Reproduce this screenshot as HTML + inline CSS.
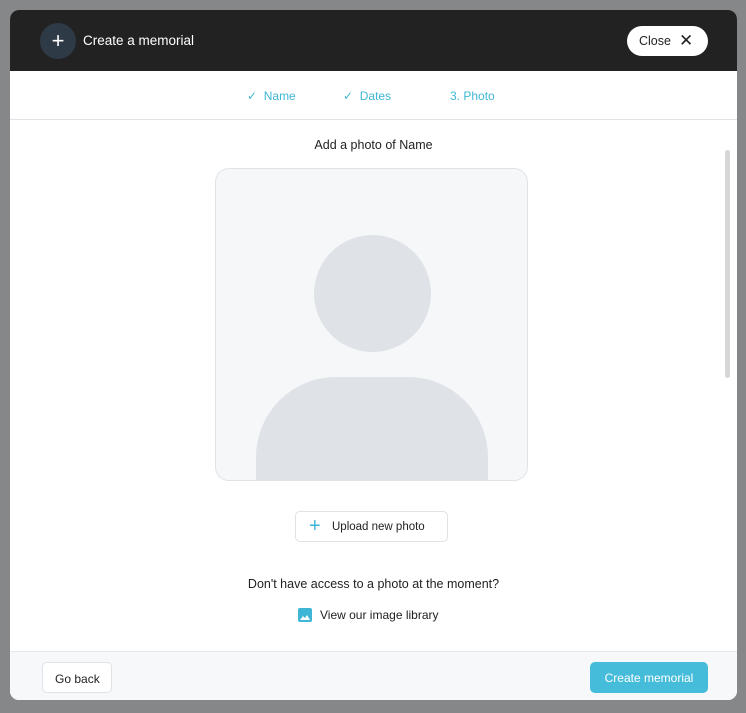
<!DOCTYPE html>
<html><head><style>
*{box-sizing:border-box;margin:0;padding:0}
body{width:746px;height:713px;background:#868788;font-family:"Liberation Sans",sans-serif;position:relative;overflow:hidden}
.modal{position:absolute;left:10px;top:10px;width:727px;height:690px;background:#fff;border-radius:9px;overflow:hidden}
.hdr{position:absolute;left:0;top:0;width:727px;height:61px;background:#222}
.plus{position:absolute;left:30px;top:13px;width:36px;height:36px;border-radius:50%;background:#2f3a47;color:#fff;font-size:22px;text-align:center;line-height:36px}
.title{position:absolute;left:73px;top:23px;color:#fff;font-size:13.5px}
.close{position:absolute;left:617px;top:16px;width:81px;height:30px;border-radius:15px;background:#fff;font-size:12.5px;color:#222;padding:8px 0 0 12px}
.close span{position:absolute;left:52px;top:5px;font-size:17px}
.tabs{position:absolute;top:61px;left:0;width:727px;height:49px;border-bottom:1px solid #dfe3e7}
.tab{position:absolute;top:18px;font-size:12px;color:#3fb6d6}
.ul{position:absolute;left:418px;top:106px;width:87px;height:3px;background:#3fb6d6;border-radius:2px}
.cap{position:absolute;top:128px;width:100%;text-align:center;font-size:12.5px;color:#222}
.photo{position:absolute;left:205px;top:158px;width:313px;height:313px;background:#f6f7f9;border:1px solid #dfe3e7;border-radius:14px;overflow:hidden}
.head{position:absolute;left:98px;top:66px;width:117px;height:117px;border-radius:50%;background:#dfe3e7}
.body{position:absolute;left:40px;top:208px;width:232px;height:120px;border-radius:80px 80px 0 0;background:#dfe3e7}
.up{position:absolute;left:285px;top:501px;width:153px;height:31px;border:1px solid #dfe3e7;border-radius:5px;font-size:11.5px;color:#222;padding:9px 0 0 36px}
.up span{position:absolute;left:13px;top:3px;font-size:20px;color:#3fb6d6;font-weight:300}
.q{position:absolute;top:567px;width:100%;text-align:center;font-size:12.5px;color:#222}
.lib{position:absolute;left:310px;top:598px;font-size:12px;color:#222}
.ico{position:absolute;left:288px;top:598px;width:14px;height:14px;background:#3fb6d6;border-radius:2px}
.foot{position:absolute;left:0;top:641px;width:727px;height:49px;background:#f7f8fa;border-top:1px solid #e5e8ec}
.back{position:absolute;left:32px;top:10px;width:70px;height:31px;background:#fff;border:1px solid #dfe3e7;border-radius:5px;font-size:12px;padding:9px 0 0 12px;color:#222}
.create{position:absolute;left:580px;top:10px;width:118px;height:31px;background:#46bcdb;border-radius:5px;font-size:12px;color:#fff;text-align:center;padding-top:9px}
.sb{position:absolute;left:715px;top:140px;width:5px;height:228px;background:#d4d6d8;border-radius:3px}
</style></head><body>
<div class="modal">
<div class="hdr"><div class="plus">+</div><div class="title">Create a memorial</div><div class="close">Close<span>✕</span></div></div>
<div class="tabs">
<div class="tab" style="left:237px">✓&nbsp;&nbsp;Name</div>
<div class="tab" style="left:333px">✓&nbsp;&nbsp;Dates</div>
<div class="tab" style="left:440px">3. Photo</div>
<div class="ul"></div>
</div>
<div class="cap">Add a photo of Name</div>
<div class="photo"><div class="head"></div><div class="body"></div></div>
<div class="up"><span>+</span>Upload new photo</div>
<div class="q">Don't have access to a photo at the moment?</div>
<div class="ico"><svg width="14" height="14"><path d="M2 12 L5 8 L7 10 L9 7 L12 12Z" fill="#fff"/></svg></div>
<div class="lib">View our image library</div>
<div class="sb"></div>
<div class="foot"><div class="back">Go back</div><div class="create">Create memorial</div></div>
</div>
</body></html>
